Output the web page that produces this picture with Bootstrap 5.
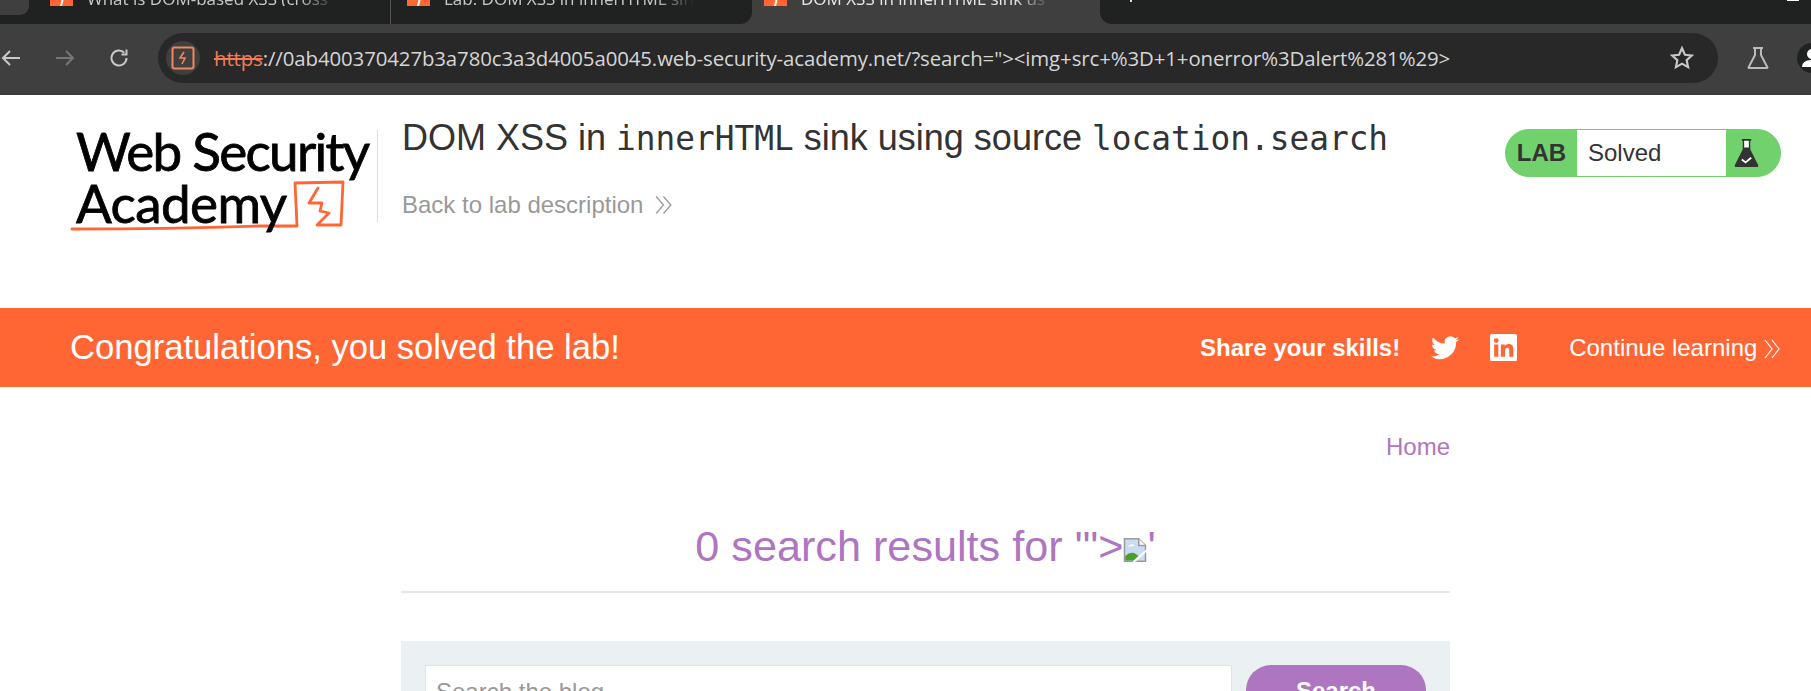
<!DOCTYPE html>
<html lang="en">
<head>
    <meta charset="UTF-8">
    <meta name="viewport" content="width=device-width, initial-scale=1.0">
    <title>DOM XSS in innerHTML sink using source location.search</title>

    <link href="https://cdn.jsdelivr.net/npm/bootstrap@5.3.0/dist/css/bootstrap.min.css" rel="stylesheet">

    <style>
        html, body { height: 691px; overflow: hidden; }
        body { font-family: "Liberation Sans", Arial, sans-serif; color: #333; background: #fff; }

        /* browser chrome */
        .tab-strip { height: 24px; background: #3f3f3f; overflow: hidden; font-size: 17px; font-family: "Open Sans", sans-serif; }
        .tab-left { width: 752px; height: 24px; background: #202222; border-radius: 0 0 12px 0; flex: none; }
        .tab-right { flex: 1; height: 24px; background: #202222; border-radius: 0 0 0 12px; }
        .tab-stub { width: 29px; height: 15px; background: #3f3f3f; border-radius: 0 0 9px 0; flex: none; }
        .tab-item { height: 24px; padding-bottom: 18px; white-space: nowrap; overflow: hidden; flex: none; }
        .tab-one { width: 362px; padding-left: 21px; border-right: 1px solid #555; }
        .tab-two { width: 361px; padding-left: 16px; }
        .tab-active { width: 348px; padding-left: 12px; flex: none; }
        .tab-fav { width: 23px; height: 16px; background: #ff6633; flex: none; margin-right: 14px; display: flex; align-items: flex-end; justify-content: center; }
        .tab-label { color: #c8c8c8; line-height: 15px; -webkit-mask-image: linear-gradient(to right, #000 85%, transparent); mask-image: linear-gradient(to right, #000 85%, transparent); width: 250px; overflow: hidden; }
        .tab-active .tab-label { color: #e8e8e8; }
        .tab-dot { width: 2px; height: 2px; background: #ddd; margin-left: 30px; flex: none; }
        .tab-min { width: 12px; height: 1px; background: #fff; margin-left: 655px; flex: none; }
        .tool-row { height: 71px; background: #3f3f3f; border-bottom: 2px solid #3a3a3a; padding-bottom: 1px; overflow: hidden; }
        .tool-btn { width: 22px; margin-right: 32px; flex: none; line-height: 0; }
        .addr-bar { width: 1560px; height: 50px; background: #282828; border-radius: 25px; margin-left: -4px; padding-left: 8px; flex: none; }
        .addr-ico { width: 34px; height: 34px; border-radius: 50%; background: #3f3f3f; flex: none; }
        .addr-url { color: #d6d6d6; font-size: 20.4px; font-family: "Open Sans", sans-serif; letter-spacing: -.1px; margin-left: 14px; white-space: nowrap; }
        .addr-https { color: #f17b55; text-decoration: line-through; }
        .star-ico { margin-right: 23px; }
        .flask-ico { margin-left: 29px; flex: none; }
        .avatar-ico { margin-left: 28px; flex: none; }

        /* lab header */
        .lab-head { height: 213px; padding: 22px 30px 0 70px; }
        .logo-box { width: 308px; height: 92px; margin-top: 13px; border-right: 1px solid #ddd; flex: none; position: relative; }
        .logo-text { font-family: Lato, sans-serif; color: #000; font-size: 53px; line-height: 52px; letter-spacing: -1.7px; -webkit-text-stroke: .8px #000; padding-left: 6px; margin-top: -5px; white-space: nowrap; position: relative; z-index: 1; }
        .logo-word { letter-spacing: -.6px; }
        .logo-art { position: absolute; left: 0; top: 0; }
        .lab-title { padding-left: 24px; }
        .lab-title h2 { font-size: 36px; font-weight: 400; margin: 0; line-height: 42px; color: #333; white-space: nowrap; }
        .lab-title code { font-family: "DejaVu Sans Mono", monospace; font-size: 32.8px; color: #333; }
        .lab-back { color: #999; font-size: 24px; text-decoration: none; margin-top: 27px; display: inline-flex; align-items: center; gap: 12px; }
        .lab-status { width: 276px; height: 48px; margin-top: 12px; background: #70d16d; border-radius: 24px; border: 1px solid #70d16d; flex: none; overflow: hidden; font-size: 24px; }
        .status-lab { width: 71px; font-weight: 700; color: #333; text-align: center; }
        .status-val { width: 149px; background: #fff; padding-left: 11px; height: 46px; line-height: 46px; }

        /* congrats bar */
        .solved-bar { height: 79px; background: #ff6633; color: #fff; padding: 0 30px 0 70px; }
        .solved-msg { font-size: 34.6px; }
        .solved-share { font-size: 24px; font-weight: 700; }
        .solved-next { font-size: 24px; color: #fff; text-decoration: none; margin-left: 52px; white-space: nowrap; }
        .solved-ico { margin-left: 31px; }

        /* blog content */
        .blog-wrap { width: 1049px; margin-left: 401px; }
        .blog-home { color: #ae75c0; font-size: 24px; text-decoration: none; }
        .blog-nav { padding-top: 46px; line-height: 28px; }
        .blog-title { color: #ae75c0; font-size: 43.2px; font-weight: 400; margin: 56px 0 0; line-height: 52px; text-align: center; }
        .blog-rule { height: 2px; background: #e6e6e6; margin-top: 19px; }
        .blog-search { background: #ebf0f2; margin-top: 48px; padding: 24px; height: 120px; }
        .blog-input { width: 807px; height: 60px; border: 1px solid #dde3e6; background: #fff; color: #999; font-size: 24px; padding: 8px 10px; }
        .blog-btn { width: 180px; height: 60px; background: #ae75c0; color: #fff; font-weight: 700; font-size: 24px; border: 0; border-radius: 25px; padding: 0 0 8px; }
    </style>
</head>
<body>

    <!-- browser tabs -->
    <div class="tab-strip d-flex">
        <div class="tab-left d-flex align-items-start">
            <div class="tab-stub"></div>
            <div class="tab-item tab-one d-flex align-items-end">
                <span class="tab-fav"><svg width="10" height="16" viewBox="0 0 10 16"><path d="M7 0L3 16h2L9 0z" fill="#fff"/></svg></span><span class="tab-label">What is DOM-based XSS (cross</span>
            </div>
            <div class="tab-item tab-two d-flex align-items-end">
                <span class="tab-fav"><svg width="10" height="16" viewBox="0 0 10 16"><path d="M7 0L3 16h2L9 0z" fill="#fff"/></svg></span><span class="tab-label">Lab: DOM XSS in innerHTML sin</span>
            </div>
        </div>
        <div class="tab-item tab-active d-flex align-items-end">
            <span class="tab-fav"><svg width="10" height="16" viewBox="0 0 10 16"><path d="M7 0L3 16h2L9 0z" fill="#fff"/></svg></span><span class="tab-label">DOM XSS in innerHTML sink us</span>
        </div>
        <div class="tab-right d-flex align-items-start">
            <span class="tab-dot"></span>
            <span class="tab-min"></span>
        </div>
    </div>

    <!-- browser toolbar -->
    <div class="tool-row d-flex align-items-center">
        <div class="tool-btn">
            <svg width="22" height="22" viewBox="0 0 22 22" fill="none" stroke="#c8c8c8" stroke-width="2"><path d="M20 11H3M10 4l-7 7 7 7"/></svg>
        </div>
        <div class="tool-btn">
            <svg width="22" height="22" viewBox="0 0 22 22" fill="none" stroke="#777" stroke-width="2"><path d="M2 11h17M12 4l7 7-7 7"/></svg>
        </div>
        <div class="tool-btn">
            <svg width="22" height="22" viewBox="0 0 22 22" fill="none" stroke="#c8c8c8" stroke-width="2"><path d="M18.500 11a7.500 7.500 0 1 1-2.200-5.300"/><path d="M18.500 2.500v5h-5" /></svg>
        </div>
        <div class="addr-bar d-flex align-items-center">
            <div class="addr-ico d-flex align-items-center justify-content-center">
                <svg width="24" height="24" viewBox="0 0 24 24" fill="none" stroke="#f4865f" stroke-width="2"><rect x="1.500" y="1.500" width="21" height="21" rx="2"/><path d="M13 6l-4 6h5l-3 6" stroke-width="1.600"/></svg>
            </div>
            <div class="addr-url flex-grow-1"><span class="addr-https">https</span>://0ab400370427b3a780c3a3d4005a0045.web-security-academy.net/?search="&gt;&lt;img+src+%3D+1+onerror%3Dalert%281%29&gt;</div>
            <svg class="star-ico" width="26" height="26" viewBox="0 0 24 24" fill="none" stroke="#c8c8c8" stroke-width="2"><path d="M12 3l2.700 6 6.300.7-4.700 4.300 1.300 6.400L12 17.200l-5.600 3.200 1.300-6.400L3 9.700l6.300-.7z"/></svg>
        </div>
        <svg class="flask-ico" width="22" height="22" viewBox="0 0 22 22" fill="none" stroke="#bbb" stroke-width="2"><path d="M6 1h10M8 1v7L1.500 20.500q0 .5 1 .5h17q1 0 1-.5L14 8V1"/></svg>
        <svg class="avatar-ico" width="30" height="30" viewBox="0 0 30 30"><circle cx="15" cy="15" r="15" fill="#202222"/><circle cx="15" cy="11" r="5" fill="#fff"/><path d="M5 24q0-7 10-7t10 7z" fill="#fff"/></svg>
    </div>

    <!-- lab header -->
    <div class="lab-head d-flex justify-content-between align-items-start">
        <div class="d-flex">
            <div class="logo-box">
                <div class="logo-text">Web Security<br><span class="logo-word">Academy</span></div>
                <svg class="logo-art" width="308" height="110" viewBox="0 0 308 110" fill="none" stroke="#ff6633" stroke-width="2.800" stroke-linejoin="round" stroke-linecap="round"><path d="M2 99Q100 99 190 96L227 96 225 53 273 52 271 95 247 95 259 83 250 81 252 73 239 73 248 58"/></svg>
            </div>
            <div class="lab-title">
                <h2>DOM XSS in <code>innerHTML</code> sink using source <code>location.search</code></h2>
                <a class="lab-back" href="#">Back to lab description
                    <svg width="18" height="20" viewBox="0 0 17 18" fill="none" stroke="#999" stroke-width="1.200"><path d="M1 1l7 8-7 8M8 1l7 8-7 8"/></svg>
                </a>
            </div>
        </div>
        <div class="lab-status d-flex align-items-center">
            <div class="status-lab">LAB</div>
            <div class="status-val">Solved</div>
            <div class="flex-grow-1 ps-2">
                <svg class="d-block" width="25" height="30" viewBox="0 0 26 32"><path d="M8 1h10v2h-1v9l8.500 17q.5 2-2 2H2.500q-2.500 0-2-2L9 12V3H8z" fill="#333"/><path d="M10.500 3h5v7h-5z" fill="#fff"/><path d="M8 23l4 3 6-5" fill="none" stroke="#fff" stroke-width="2"/></svg>
            </div>
        </div>
    </div>

    <!-- solved banner -->
    <div class="solved-bar d-flex align-items-center justify-content-between">
        <div class="solved-msg">Congratulations, you solved the lab!</div>
        <div class="d-flex align-items-center">
            <span class="solved-share">Share your skills!</span>
            <svg class="solved-ico" width="28" height="24" viewBox="0 0 24 20" fill="#fff"><path d="M24 2.400a10 10 0 0 1-2.800.8 5 5 0 0 0 2.200-2.700 10 10 0 0 1-3.100 1.200 4.900 4.900 0 0 0-8.400 4.500A14 14 0 0 1 1.700.9a4.900 4.900 0 0 0 1.500 6.600 4.900 4.900 0 0 1-2.200-.6 4.900 4.900 0 0 0 3.900 4.900 5 5 0 0 1-2.200.1 4.900 4.900 0 0 0 4.600 3.400A9.900 9.900 0 0 1 0 17.300 14 14 0 0 0 21.500 4.900 10 10 0 0 0 24 2.400z"/></svg>
            <svg class="solved-ico" width="27" height="27" viewBox="0 0 26 26"><rect width="26" height="26" rx="1.500" fill="#fff"/><path d="M4 10h4v12H4zM6 4a2.300 2.300 0 1 1 0 4.600A2.300 2.300 0 0 1 6 4zM10.500 10h3.800v1.700c.7-1.200 2-2 3.800-2 3.500 0 4.400 2.300 4.400 5.400V22h-4v-6.100c0-1.500-.3-2.700-1.900-2.700s-2.100 1.200-2.100 2.700V22h-4z" fill="#ff6633"/></svg>
            <a class="solved-next" href="#">Continue learning
                <svg width="17" height="20" viewBox="0 0 17 20" fill="none" stroke="#fff" stroke-width="1.200"><path d="M1 1l7 9-7 9M8 1l7 9-7 9"/></svg>
            </a>
        </div>
    </div>

    <!-- blog page -->
    <div class="blog-wrap">
        <div class="blog-nav text-end"><a class="blog-home" href="#">Home</a></div>
        <h1 class="blog-title">0 search results for '"&gt;<svg width="24" height="24" viewBox="0 0 16 16"><path d="M1 .5h9.500L15 5v10.500H1z" fill="#c9dcf4" stroke="#9a9a9a"/><path d="M10.500.5V5H15" fill="#fff" stroke="#9a9a9a"/><path d="M3 6q2-3 5-1z" fill="#fff"/><path d="M1.500 15v-3q3-3 6-2l3 2-2.500 3z" fill="#4aa02c"/><path d="M7 16L16 8" stroke="#fff" stroke-width="1.500"/></svg>'</h1>
        <div class="blog-rule"></div>
        <div class="blog-search d-flex justify-content-between">
            <div class="blog-input">Search the blog...</div>
            <button class="blog-btn">Search</button>
        </div>
    </div>

    <script src="https://cdn.jsdelivr.net/npm/bootstrap@5.3.0/dist/js/bootstrap.bundle.min.js"></script>
</body>
</html>
